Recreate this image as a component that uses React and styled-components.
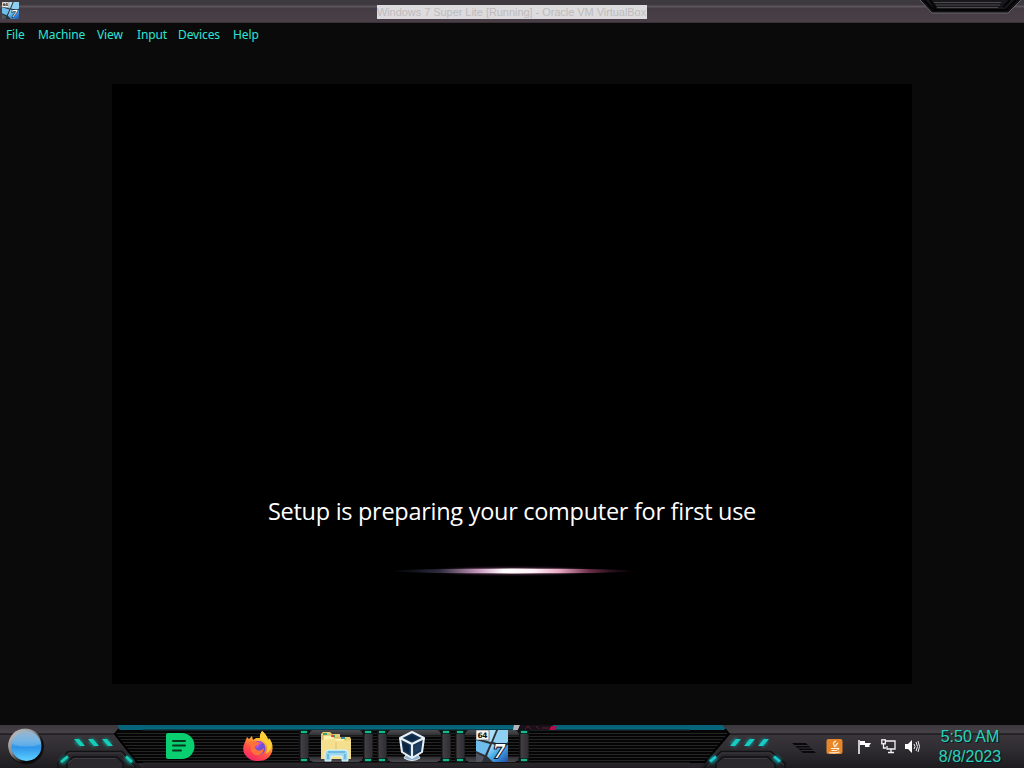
import React from 'react';
import styled, { createGlobalStyle } from 'styled-components';

const GlobalStyle = createGlobalStyle`
  * {
    box-sizing: border-box;
  }

  body {
    margin: 0;
    background: #0a0a0a;
    overflow: hidden;
  }
`;

const Screen = styled.div`
  width: 1024px;
  height: 768px;
  display: flex;
  flex-direction: column;
  background: #0a0a0a;
  overflow: hidden;

  svg {
    display: block;
  }
`;

const TitleBar = styled.header`
  height: 23px;
  flex: none;
  display: flex;
  justify-content: space-between;
  align-items: flex-start;
  background: linear-gradient(#3e383f 0 5px, #5c545b 6px 7px, #443c44 8px, #4a3f47 22px, #2a2428 23px);
`;

const TitleSide = styled.div`
  width: ${({ $end }) => ($end ? 111 : 110)}px;
  display: flex;
  justify-content: ${({ $end }) => ($end ? 'flex-end' : 'flex-start')};
  padding-left: ${({ $end }) => ($end ? 0 : 2)}px;
  padding-top: ${({ $end }) => ($end ? 0 : 2)}px;
`;

const Title = styled.div`
  width: 270px;
  height: 14px;
  margin-top: 5px;
  background: #dddbdd;
  color: #bdbbbd;
  font: 11px/14px 'Liberation Sans', Arial, sans-serif;
  letter-spacing: -0.05px;
  text-align: center;
  white-space: nowrap;
`;

const MenuBar = styled.nav`
  height: 23px;
  flex: none;
  display: flex;
  gap: 12px;
  padding-left: 6px;
`;

const MenuItem = styled.span`
  width: ${({ $width }) => $width}px;
  color: #2fe3d6;
  font: 12px/23px 'Noto Sans', Tahoma, sans-serif;
  letter-spacing: -0.12px;
  white-space: nowrap;
`;

const Workspace = styled.main`
  flex: 1;
  display: flex;
  justify-content: center;
  align-items: flex-start;
  padding-top: 38px;
`;

const GuestDisplay = styled.section`
  width: 800px;
  height: 600px;
  display: flex;
  flex-direction: column;
  align-items: center;
  gap: 35px;
  padding-top: 410px;
  background: #000;
`;

const Message = styled.div`
  color: #fff;
  font: 23.5px/34px 'Open Sans', 'Segoe UI', sans-serif;
  letter-spacing: -0.28px;
  white-space: nowrap;
`;

const Taskbar = styled.footer`
  height: 43px;
  flex: none;
  display: flex;
  background: linear-gradient(#3b383d 0, #454147 8px, #0d0c0e 9px, #39353b 10px, #302d32 24px, #1c1b1e 43px);
`;

const StartArea = styled.div`
  width: 56px;
  flex: none;
`;

const AppStrip = styled.div`
  width: 547px;
  flex: none;
  display: flex;
  gap: 4px;
  background:
    linear-gradient(#075d74, #076a80 4px, #0a171b 5px, transparent 6px),
    linear-gradient(transparent 37px, #29272a 38px, #222024),
    repeating-linear-gradient(#050505 0 2px, #252526 2px 3px);
`;

const AppSlot = styled.div`
  width: 74px;
  height: 38px;
  flex: none;
  display: flex;
  justify-content: space-between;
  padding-top: 5px;
`;

const SlotFace = styled.div`
  width: 54px;
  height: 32px;
  display: flex;
  justify-content: center;
  align-items: center;
  border-radius: 5px;
  background: ${({ $open }) =>
    $open
      ? 'linear-gradient(#4d4c52 0, #323135 5px, transparent 6px, transparent 26px, #302f33 27px, #4a494e 32px)'
      : 'none'};
`;

const IconNudge = styled.div`
  margin: 0 ${({ $shift }) => $shift}px 0 0;
`;

const Pillar = styled.div`
  width: 10px;
  height: 32px;
  display: flex;
  flex-direction: column;
  align-items: center;
  justify-content: space-between;
  background: linear-gradient(90deg, #111 0 1px, #413e44 2px, #302e33 9px, #111);
  border-top: 4px solid #0d1212;
  border-bottom: 4px solid #0d1212;
  visibility: ${({ $open }) => ($open ? 'visible' : 'hidden')};
`;

const Lamp = styled.i`
  width: 6px;
  height: 2px;
  margin: -3px 0;
  background: #14b98f;
  box-shadow: 0 0 2px #0b8f72;
`;

const StripTail = styled.div`
  flex: 1;
  margin-left: -22px;
`;

const Tray = styled.div`
  flex: 1;
  display: flex;
  align-items: flex-start;
  padding-top: 13px;
`;

const TrayItem = styled.div`
  width: ${({ $width }) => $width}px;
  flex: none;
`;

const Clock = styled.div`
  width: 66px;
  margin: -11px 0 0 15px;
  color: #28d3bd;
  font: 16px/20px 'Liberation Sans', Arial, sans-serif;
  text-align: center;
  white-space: nowrap;
  text-shadow: 1px 1px 0 #071716;
`;

const WindowsTile = ({ size }) => (
  <svg width={size} height={size} viewBox="0 0 32 32">
    <defs>
      <linearGradient id="tile" x2="1" y2="1">
        <stop stopColor="#d8f2fc" />
        <stop offset=".45" stopColor="#4bb0ea" />
        <stop offset="1" stopColor="#1d4eaa" />
      </linearGradient>
    </defs>
    <rect width="32" height="32" fill="#2c3138" />
    <path d="M12 0H20L15 12L0 8V5Z" fill="#a9def6" />
    <path d="M22 0H32V12L28 15L17 12Z" fill="#8fd0f2" />
    <path d="M0 10L14 14L9 25L0 21Z" fill="#6fbdec" />
    <path d="M16 14L27 17L32 15V32H17L11 26Z" fill="url(#tile)" />
    <path d="M0 23L8 27L6 32H0Z" fill="#51565e" />
    <rect width="13" height="10" fill="#f4f4f4" stroke="#444" strokeWidth=".6" />
    <text x="1.4" y="8" fill="#111" fontFamily="DejaVu Sans" fontWeight="bold" fontSize="7.5" textLength="10">64</text>
    <text x="17" y="28" fill="#fff" stroke="#111d35" strokeWidth="2.2" paintOrder="stroke" fontFamily="DejaVu Serif" fontStyle="italic" fontWeight="bold" fontSize="18">7</text>
  </svg>
);

const WindowControls = () => (
  <svg width="110" height="15">
    <path d="M6 0L18 13H94L107 0" fill="#111014" stroke="#69656b" />
    <path d="M10 0L20 10H92L102 0" fill="#18171a" stroke="#040405" strokeWidth="2" />
    <path d="M20 2.5H87M22 5H86M23 7.5H84" stroke="#4d4b50" />
    <path d="M16 0L22 9M89 7L96 0" stroke="#050505" strokeWidth="2" />
  </svg>
);

const Glow = () => (
  <svg width="260" height="16">
    <defs>
      <radialGradient id="halo">
        <stop stopColor="#ffd9f0" stopOpacity=".9" />
        <stop offset=".4" stopColor="#bb7196" stopOpacity=".5" />
        <stop offset="1" stopColor="#40234c" stopOpacity="0" />
      </radialGradient>
      <linearGradient id="beam">
        <stop stopColor="#1d2838" stopOpacity="0" />
        <stop offset=".2" stopColor="#2c2b3c" />
        <stop offset=".36" stopColor="#c99bc0" />
        <stop offset=".46" stopColor="#fff" />
        <stop offset=".58" stopColor="#fff0f8" />
        <stop offset=".68" stopColor="#e8a9c4" />
        <stop offset=".8" stopColor="#70304a" />
        <stop offset="1" stopColor="#28101d" stopOpacity="0" />
      </linearGradient>
      <filter id="beamSoft" x="-5%" y="-60%" width="110%" height="220%">
        <feGaussianBlur stdDeviation="1.5 .5" />
      </filter>
    </defs>
    <ellipse cx="132" cy="8" rx="96" ry="5.5" fill="url(#halo)" />
    <ellipse cx="132" cy="8" rx="124" ry="2.4" fill="url(#beam)" filter="url(#beamSoft)" />
  </svg>
);

const StartOrb = () => (
  <svg width="56" height="43">
    <defs>
      <linearGradient id="orb" x2="0" y2="1">
        <stop stopColor="#8fa7bb" />
        <stop offset=".3" stopColor="#5fa7df" />
        <stop offset=".55" stopColor="#2f97ea" />
        <stop offset="1" stopColor="#5fd0ff" />
      </linearGradient>
      <linearGradient id="rim" x2="1" y2="1">
        <stop stopColor="#d1d0d0" />
        <stop offset=".4" stopColor="#88888c" />
        <stop offset=".7" stopColor="#080808" />
      </linearGradient>
    </defs>
    <circle cx="26" cy="21.5" r="18" fill="#111" />
    <circle cx="25.5" cy="20.8" r="17.4" fill="url(#rim)" />
    <circle cx="26.5" cy="21" r="15" fill="url(#orb)" />
    <path d="M12 19A14.5 14.5 0 0 1 41 19Q26 24 12 19" fill="#bfe0f5" opacity=".25" />
  </svg>
);

const Lines = ({ from, to }) => (
  <path
    d={Array.from({ length: 10 }, (_, i) => `M${from} ${8.5 + i * 3}H${to}`).join('')}
    stroke="#252526"
  />
);

const LeftWing = () => (
  <svg width="87" height="43">
    <defs>
      <clipPath id="leftEdge"><path d="M63 5H87V37H80L59 10Z" /></clipPath>
      <filter id="tealGlow" x="-50%" y="-50%" width="200%" height="200%">
        <feGaussianBlur stdDeviation="1.5" />
      </filter>
    </defs>
    <path d="M62 0H87V5H63Z" fill="#07647a" />
    <path d="M63 5H87V37H80L59 10Z" fill="#050505" />
    <g clipPath="url(#leftEdge)"><Lines from="55" to="87" /></g>
    <path d="M63 4L59 9L81 37H87" fill="none" stroke="#000" strokeWidth="2" />
    <path d="M81 38L86 43H87V38Z" fill="#29272a" />
    <path d="M2 43V38L12 26.5H66L80 43" fill="none" stroke="#121114" strokeWidth="1.5" />
    <path d="M3 39L13 28H65L78 42" fill="none" stroke="#3f3b41" />
    <path d="M11 43V38L17 32H61L67 38V43" fill="#2b282d" stroke="#121114" strokeWidth="1.5" />
    <path d="M12 38L18 33.5H60" fill="none" stroke="#3d393f" />
    <g stroke="#08ae9d" strokeWidth="6" filter="url(#tealGlow)" opacity=".7">
      <path d="M20 15L26 20M34 15L40 20M48 15L54 20M5 38L11 32M70 32L76 38" />
    </g>
    <path d="M18 14H23L29 21H24ZM32 14H37L43 21H38ZM46 14H51L57 21H52Z" fill="#16cdb9" />
    <path d="M5 37L12 31.5M70 31.5L76 37" stroke="#19cdbb" strokeWidth="2.6" />
  </svg>
);

const RightWing = () => (
  <svg width="102" height="43">
    <defs>
      <clipPath id="rightEdge"><path d="M0 5H35L38 10L15 37H0Z" /></clipPath>
    </defs>
    <path d="M0 0H32L37 5H0Z" fill="#07647a" />
    <path d="M0 5H35L38 9L15 37H0Z" fill="#050505" />
    <path d="M0 37.5H16L10 43H0Z" fill="#252327" />
    <g clipPath="url(#rightEdge)"><Lines from="0" to="40" /></g>
    <path d="M35 4L39 9L15 37H0" fill="none" stroke="#000" strokeWidth="2" />
    <path d="M14 43L31 26.5H81L95 38V43" fill="none" stroke="#121114" strokeWidth="1.5" />
    <path d="M17 41L32 28H80L94 40" fill="none" stroke="#3f3b41" />
    <path d="M26 43V38L33 32H78L85 39V43" fill="#2b282d" stroke="#121114" strokeWidth="1.5" />
    <path d="M34 33.5H77" stroke="#3d393f" />
    <g stroke="#08aeb0" strokeWidth="6" filter="url(#tealGlow)" opacity=".7">
      <path d="M42 20L48 15M57 20L62 15M71 20L76 15M20 37L26 32M84 32L90 37" />
    </g>
    <path d="M40 21L46 14H51L45 21ZM54 21L60 14H65L59 21ZM68 21L74 14H79L73 21Z" fill="#16cdc4" />
    <path d="M20 36.5L26 31.5M84 31.5L90 36.5" stroke="#18cbd0" strokeWidth="2.6" />
  </svg>
);

const NotesIcon = () => (
  <svg width="30" height="28">
    <path d="M3 1H17A12.5 13 0 0 1 17 27H3Q1 27 1 25V3Q1 1 3 1Z" fill="#09cf70" />
    <path d="M8 9H20M8 13.5H20M8 18.5H16" stroke="#07391f" strokeWidth="2" strokeLinecap="round" />
  </svg>
);

const FirefoxIcon = () => (
  <svg width="32" height="32" viewBox="0 0 32 32">
    <defs>
      <linearGradient id="fox" x1=".8" x2=".3" y2="1">
        <stop stopColor="#fff04a" />
        <stop offset=".35" stopColor="#ffb52c" />
        <stop offset=".65" stopColor="#ff5544" />
        <stop offset="1" stopColor="#f42367" />
      </linearGradient>
    </defs>
    <path d="M5 7L3 12Q0 18 2 23Q6 31 16 31Q27 31 30 22Q32 14 27 8L26 10Q25 5 20 1Q18 4 18 8L14 8L11 10L10 6L7 9L5 7Z" fill="url(#fox)" />
    <circle cx="16.5" cy="18" r="7" fill="#7053d4" />
    <path d="M12 13Q16 9 21 13L18 15L16 18L11 17Z" fill="#b250de" />
    <path d="M6 12L12 11Q15 12 18 13Q16 16 13 16Q12 18 15 20Q18 22 22 18Q21 26 14 25Q8 23 9 18Z" fill="#ff7139" />
    <path d="M20 1Q15 8 21 11Q28 14 24 24Q32 19 28 10L26 10Q25 5 20 1Z" fill="#ffcf38" />
  </svg>
);

const FolderIcon = () => (
  <svg width="34" height="32" viewBox="0 0 34 32">
    <path d="M2 4L4 2H11L13 4H21V7H31L32 9V29H2Z" fill="#e6ce74" />
    <path d="M4 5H15V8H26V11H30V28H4Z" fill="#fff0aa" stroke="#b8984e" strokeWidth=".7" />
    <path d="M4 4H8M12 6H16M22 8H26" stroke="#3ba46c" strokeWidth="2" />
    <path d="M13 6H15" stroke="#d94748" strokeWidth="2" />
    <path d="M22 8H25" stroke="#3b83cf" strokeWidth="2" />
    <path d="M2 10L15 9L18 11L32 10V29H2Z" fill="#f3df8e" />
    <path d="M17 12V21" stroke="#dcc474" />
    <path d="M6 31V23Q6 20 10 20H26Q29 20 29 23V31H23V26H12V31Z" fill="#9cd6ef" stroke="#ddf8fe" />
    <path d="M9 22H26M9 24V29M26 24V29" stroke="#5eb2dc" strokeWidth="1.5" />
  </svg>
);

const BoxIcon = () => (
  <svg width="30" height="32" viewBox="0 0 30 32">
    <path d="M9 25H21L23 28Q15 33 7 28Z" fill="#8fb0cc" stroke="#dbe8f2" />
    <path d="M15 2L27 8L25 22L15 28L5 22L3 8Z" fill="#173451" stroke="#e8f0f7" strokeWidth="2" strokeLinejoin="round" />
    <path d="M3 8L15 14L27 8M15 14V28" fill="none" stroke="#e8f0f7" strokeWidth="2.2" />
    <path d="M9 8L15 5L21 8L15 11Z" fill="#0c2748" />
    <path d="M5.5 12L12 15.5V23L7 20Z" fill="#082344" />
    <path d="M24.5 12L18 15.5V23L23 20Z" fill="#1f3f63" />
  </svg>
);

const TopShards = () => (
  <svg width="50" height="6">
    <path d="M3 0H9L7 5H2Z" fill="#b7b5b9" />
    <path d="M9 0H42L40 5H7Z" fill="#171219" />
    <path d="M14 4L17 1L20 4M25 1L28 4M31 3H38" stroke="#6d1735" fill="none" />
    <path d="M40 1H46L44 5H38Z" fill="#b30c4a" />
  </svg>
);

const apps = [
  { name: 'notes', icon: <NotesIcon />, shift: 1 },
  { name: 'firefox', icon: <FirefoxIcon />, shift: 0 },
  { name: 'files', icon: <FolderIcon />, open: true, shift: 0 },
  { name: 'virtualbox', icon: <BoxIcon />, open: true, shift: 4 },
  { name: 'machine', icon: <WindowsTile size={32} />, open: true, shift: 1 },
];

const menu = [
  ['File', 20],
  ['Machine', 47],
  ['View', 28],
  ['Input', 29],
  ['Devices', 43],
  ['Help', 25],
];

const SlotPillar = ({ open }) => (
  <Pillar $open={open}>
    <Lamp />
    <Lamp />
  </Pillar>
);

const TrayIcons = () => (
  <>
    <TrayItem $width={34}>
      <svg width="26" height="18">
        <path d="M0 5H14L24 15H11Z" fill="#08080a" />
        <path d="M3 7.5H17M6 10H20M9 12.5H23" stroke="#343136" />
      </svg>
    </TrayItem>
    <TrayItem $width={31}>
      <svg width="17" height="17">
        <rect x=".5" y="1" width="16" height="15" rx="2" fill="#e8862c" />
        <path d="M10 3Q6 5 8 7Q9 8 8 9M12 5Q9 7 10 9M5 10.5H11.5Q14 10 11.5 12M5.5 12.5H11M3.5 14.5Q8 15.5 13.5 14" fill="none" stroke="#fff3e2" strokeWidth="1.1" />
      </svg>
    </TrayItem>
    <TrayItem $width={24}>
      <svg width="16" height="17">
        <path d="M2 2V16" stroke="#fff" strokeWidth="1.5" />
        <path d="M3 3H8V5H14L12 8L13 9H8V7H3Z" fill="#fff" />
      </svg>
    </TrayItem>
    <TrayItem $width={23}>
      <svg width="17" height="17" fill="none" stroke="#f4f4f4" strokeWidth="1.3">
        <path d="M5 3H14V11H6V8M10 11V14M7 14.5H13M2.5 5V10H5" />
        <rect x=".8" y="1.8" width="3.5" height="4" />
      </svg>
    </TrayItem>
    <TrayItem $width={18}>
      <svg width="18" height="17">
        <path d="M1 6H4L8 2V15L4 11H1Z" fill="#fff" />
        <path d="M10 6Q12 8.5 10 11M12 4Q15 8.5 12 13M14 3Q17 8.5 14 14" fill="none" stroke="#eee" />
      </svg>
    </TrayItem>
  </>
);

const App = () => (
  <Screen>
    <GlobalStyle />
    <TitleBar>
      <TitleSide><WindowsTile size={17} /></TitleSide>
      <Title>Windows 7 Super Lite [Running] - Oracle VM VirtualBox</Title>
      <TitleSide $end><WindowControls /></TitleSide>
    </TitleBar>
    <MenuBar>
      {menu.map(([label, width]) => (
        <MenuItem key={label} $width={width}>{label}</MenuItem>
      ))}
    </MenuBar>
    <Workspace>
      <GuestDisplay>
        <Message>Setup is preparing your computer for first use</Message>
        <Glow />
      </GuestDisplay>
    </Workspace>
    <Taskbar>
      <StartArea><StartOrb /></StartArea>
      <LeftWing />
      <AppStrip>
        {apps.map(({ name, icon, open, shift }) => (
          <AppSlot key={name}>
            <SlotPillar open={open} />
            <SlotFace $open={open}>
              <IconNudge $shift={shift}>{icon}</IconNudge>
            </SlotFace>
            <SlotPillar open={open} />
          </AppSlot>
        ))}
        <StripTail><TopShards /></StripTail>
      </AppStrip>
      <RightWing />
      <Tray>
        <TrayIcons />
        <Clock>5:50 AM<br />8/8/2023</Clock>
      </Tray>
    </Taskbar>
  </Screen>
);

export default App;
